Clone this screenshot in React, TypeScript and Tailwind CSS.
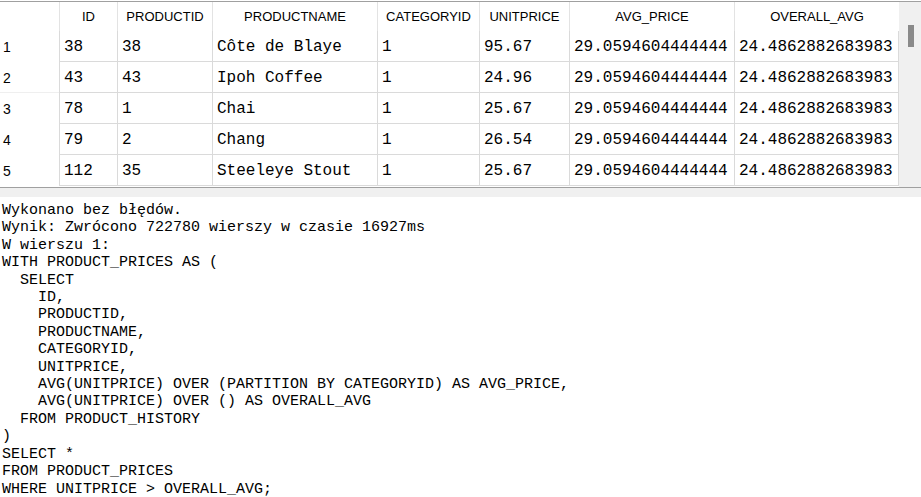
import { Fragment } from "react";

const columns = ["ID", "PRODUCTID", "PRODUCTNAME", "CATEGORYID", "UNITPRICE", "AVG_PRICE", "OVERALL_AVG"];

const rows = [
  ["38", "38", "Côte de Blaye", "1", "95.67", "29.0594604444444", "24.4862882683983"],
  ["43", "43", "Ipoh Coffee", "1", "24.96", "29.0594604444444", "24.4862882683983"],
  ["78", "1", "Chai", "1", "25.67", "29.0594604444444", "24.4862882683983"],
  ["79", "2", "Chang", "1", "26.54", "29.0594604444444", "24.4862882683983"],
  ["112", "35", "Steeleye Stout", "1", "25.67", "29.0594604444444", "24.4862882683983"],
];

const output = `Wykonano bez błędów.
Wynik: Zwrócono 722780 wierszy w czasie 16927ms
W wierszu 1:
WITH PRODUCT_PRICES AS (
  SELECT
    ID,
    PRODUCTID,
    PRODUCTNAME,
    CATEGORYID,
    UNITPRICE,
    AVG(UNITPRICE) OVER (PARTITION BY CATEGORYID) AS AVG_PRICE,
    AVG(UNITPRICE) OVER () AS OVERALL_AVG
  FROM PRODUCT_HISTORY
)
SELECT *
FROM PRODUCT_PRICES
WHERE UNITPRICE > OVERALL_AVG;`;

function ResultGrid() {
  return (
    <div className="grid grid-cols-[59px_58px_95px_165px_102px_90px_165px_165px] grid-rows-[29px_31px_31px_31px_31px_31px] bg-white">
      {/* header */}
      <div className="bg-white" />
      {columns.map((c) => (
        <div
          key={c}
          className="flex items-center justify-center border-l border-[#e3e3e3] text-[13px] text-black font-['Liberation_Sans',Arial,sans-serif]"
        >
          {c}
        </div>
      ))}

      {/* body */}
      {rows.map((r, i) => (
        <Fragment key={i}>
          <div
            className={
              "flex items-center pl-[3px] pt-[2px] text-[14px] text-black font-['Liberation_Sans',Arial,sans-serif]" +
              (i === 1 ? " border-b border-[#efefef]" : "")
            }
          >
            {i + 1}
          </div>
          {r.map((v, j) => (
            <div
              key={j}
              className={
                "flex items-center overflow-hidden whitespace-pre border-l border-b border-[#dadada] pl-[4px] pt-[2px] text-[16px] text-black font-['Liberation_Mono','Courier_New',monospace]" +
                (j === r.length - 1 ? " border-r" : "")
              }
            >
              {v}
            </div>
          ))}
        </Fragment>
      ))}
    </div>
  );
}

export default function App() {
  return (
    <div className="w-[921px] h-[497px] overflow-hidden bg-white">
      <div className="mt-px flex h-[186px] border-t border-[#a0a0a0]">
        <ResultGrid />
        <div className="flex-1 bg-[#f0f0f0] pt-[23px] pl-[9px]">
          <div className="h-[22px] w-[6px] bg-[#8a8a8a]" />
        </div>
      </div>
      <div className="h-px bg-[#a0a0a0]" />
      <div className="h-[9px] bg-[#f0f0f0]" />
      <pre className="m-0 pt-[5px] pl-[2px] whitespace-pre text-[15px] leading-[17.4px] text-black font-['Liberation_Mono','Courier_New',monospace]">
        {output}
      </pre>
    </div>
  );
}
